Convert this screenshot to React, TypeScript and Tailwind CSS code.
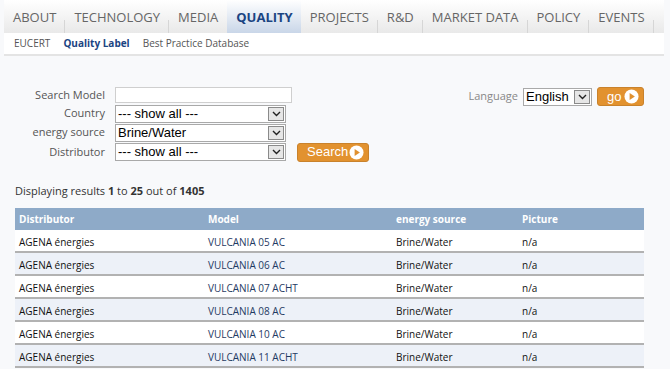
import React from 'react';

const tabs = ['ABOUT', 'TECHNOLOGY', 'MEDIA', 'QUALITY', 'PROJECTS', 'R&D', 'MARKET DATA', 'POLICY', 'EVENTS'];

const rows = [
  ['AGENA énergies', 'VULCANIA 05 AC', 'Brine/Water', 'n/a'],
  ['AGENA énergies', 'VULCANIA 06 AC', 'Brine/Water', 'n/a'],
  ['AGENA énergies', 'VULCANIA 07 ACHT', 'Brine/Water', 'n/a'],
  ['AGENA énergies', 'VULCANIA 08 AC', 'Brine/Water', 'n/a'],
  ['AGENA énergies', 'VULCANIA 10 AC', 'Brine/Water', 'n/a'],
  ['AGENA énergies', 'VULCANIA 11 ACHT', 'Brine/Water', 'n/a'],
];

const Chevron = () => (
  <svg width="9" height="6" viewBox="0 0 9 6">
    <path d="M1 1l3.5 3.5L8 1" fill="none" stroke="#222" strokeWidth="1.4" />
  </svg>
);

// classic windows-like select box
const Select = ({ value, w }: { value: string; w: string }) => (
  <div className={`flex h-[18px] items-stretch border border-[#a9a9a9] bg-white ${w}`}>
    <span className="flex-1 pl-[2px] text-[13px] leading-[16px] text-black font-['Liberation_Sans',Arial,sans-serif]">{value}</span>
    <span className="m-px flex w-[16px] items-center justify-center border border-[#8a8a8a] bg-[#e6e6e6]">
      <Chevron />
    </span>
  </div>
);

const PlayIcon = () => (
  <svg width="15" height="15" viewBox="0 0 16 16">
    <circle cx="8" cy="8" r="7.5" fill="#fff" />
    <path d="M6 4.3v7.4L11.6 8z" fill="#e0902f" />
  </svg>
);

const OrangeButton = ({ label, w }: { label: string; w: string }) => (
  <div className={`flex h-[19px] items-center justify-between rounded-[3px] border border-[#c9822c] bg-[#e2922f] pl-[9px] pr-[4px] text-[13px] text-white font-['Liberation_Sans',Arial,sans-serif] ${w}`}>
    <span>{label}</span>
    <PlayIcon />
  </div>
);

export default function App() {
  return (
    <div className="min-h-[369px] w-[670px] bg-[#f8f9fb] font-['Open_Sans',sans-serif] text-[#333]">
      {/* top navigation */}
      <div className="ml-[4px] mr-[6px] flex h-[33px] items-stretch bg-gradient-to-b from-white to-[#e9e9e9]">
        {tabs.map((t) => {
          const active = t === 'QUALITY';
          return (
            <React.Fragment key={t}>
              <div
                className={`flex items-center whitespace-nowrap pl-[9px] pr-[8px] pt-[2px] text-[13px] ${
                  active
                    ? 'bg-gradient-to-b from-white to-[#c9d6e8] font-bold text-[#1b4482]'
                    : 'text-[#666]'
                }`}
              >
                {t}
              </div>
              {t !== 'MEDIA' && t !== 'QUALITY' && <span className="mt-[20px] w-px bg-[#d6d6d6]" />}
              {t === 'MEDIA' && <span className="w-px" />}
            </React.Fragment>
          );
        })}
      </div>

      {/* sub navigation */}
      <div className="ml-[4px] mr-[6px] flex h-[23px] items-center gap-[13px] border-b-2 border-[#e4e4e4] bg-white pl-[10px] text-[10px] text-[#555]">
        <span>EUCERT</span>
        <span className="font-bold text-[#1b4482]">Quality Label</span>
        <span>Best Practice Database</span>
      </div>

      {/* search form */}
      <div className="mt-[31px] flex items-start justify-between pr-[26px]">
        <div className="flex flex-col gap-[1px] text-[11px] text-[#555]">
          <div className="flex items-center">
            <span className="w-[105px] text-right">Search Model</span>
            <div className="ml-[10px] h-[16px] w-[177px] border border-[#cfcfcf] bg-white" />
          </div>
          <div className="flex items-center">
            <span className="w-[105px] text-right">Country</span>
            <div className="ml-[10px]">
              <Select value="--- show all ---" w="w-[171px]" />
            </div>
          </div>
          <div className="flex items-center">
            <span className="w-[105px] text-right">energy source</span>
            <div className="ml-[10px]">
              <Select value="Brine/Water" w="w-[171px]" />
            </div>
          </div>
          <div className="flex items-center">
            <span className="w-[105px] text-right">Distributor</span>
            <div className="ml-[10px]">
              <Select value="--- show all ---" w="w-[171px]" />
            </div>
            <div className="ml-[11px]">
              <OrangeButton label="Search" w="w-[72px]" />
            </div>
          </div>
        </div>
        <div className="flex items-center text-[11px] text-[#888]">
          <span className="mr-[5px]">Language</span>
          <Select value="English" w="w-[69px]" />
          <div className="ml-[5px]">
            <OrangeButton label="go" w="w-[47px]" />
          </div>
        </div>
      </div>

      {/* results */}
      <div className="mt-[21px] pl-[15px] text-[11px] text-[#333]">
        Displaying results <b>1</b> to <b>25</b> out of <b>1405</b>
      </div>

      <div className="ml-[15px] mt-[9px] w-[629px] text-[10px]">
        <div className="grid h-[22px] grid-cols-[189px_188px_126px_1fr] items-center bg-[#8eaac8] pl-[4px] font-bold text-white">
          <span>Distributor</span>
          <span>Model</span>
          <span>energy source</span>
          <span>Picture</span>
        </div>
        {rows.map((r, i) => (
          <div
            key={i}
            className={`grid h-[23px] grid-cols-[189px_188px_126px_1fr] items-center border-b-2 border-[#b2b2b2] pl-[4px] pt-[3px] ${
              i % 2 === 0 ? 'bg-white' : 'bg-[#edf1f8]'
            }`}
          >
            <span className="text-[#111]">{r[0]}</span>
            <span className="text-[#1f3a63]">{r[1]}</span>
            <span className="text-[#111]">{r[2]}</span>
            <span className="text-[#111]">{r[3]}</span>
          </div>
        ))}
      </div>
    </div>
  );
}
